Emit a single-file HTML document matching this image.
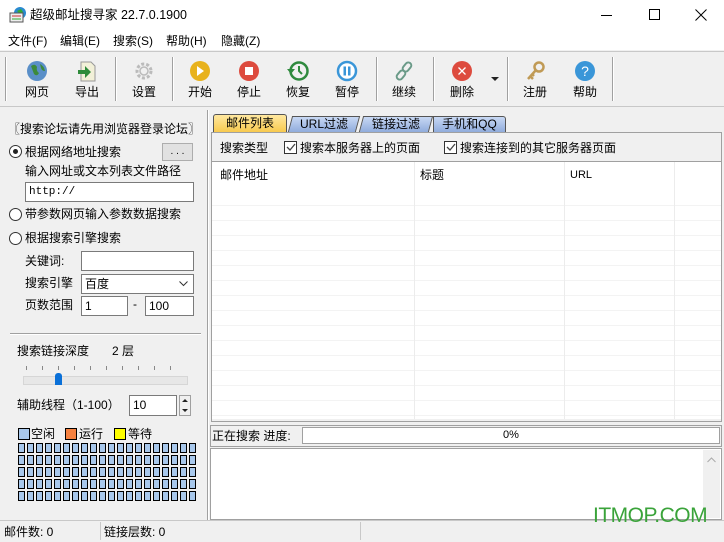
<!DOCTYPE html>
<html><head><meta charset="utf-8"><style>
*{box-sizing:border-box;margin:0;padding:0}
body{width:724px;height:542px;overflow:hidden;background:#f0f0f0;font-family:"Liberation Sans","Noto Sans CJK SC",sans-serif;font-size:12px;color:#000;position:relative}
.a{position:absolute;white-space:nowrap}
.t{line-height:14px}
.sep{position:absolute;top:57px;width:2px;height:44px;border-left:1px solid #a0a0a0;border-right:1px solid #fff}
.btn{position:absolute;top:60px;width:44px;text-align:center}
.btn svg{display:block;margin:0 auto}
.btn span{display:block;margin-top:3px;line-height:14px}
.inp{position:absolute;background:#fff;border:1px solid #7a7a7a;height:20px;padding-left:3px;line-height:18px}
.radio{position:absolute;width:13px;height:13px;border:1px solid #333;border-radius:50%;background:#fff}
.chk{position:absolute;width:13px;height:13px;border:1px solid #333;background:#fff}
.grid{position:absolute;left:18px;top:443px;display:grid;grid-template-columns:repeat(20,7px);grid-auto-rows:10px;column-gap:2px;row-gap:2px}
.grid i{display:block;background:#a8c8ec;border:1px solid #000}
</style></head><body>
<div class="a" style="left:0;top:0;width:724px;height:50px;background:#fff"></div>
<svg class="a" style="left:9px;top:6px" width="18" height="18"><circle cx="11" cy="7" r="6" fill="#2a8ad0"/><path d="M8 5 l4 -2 2 3 -3 2z" fill="#3a3"/><rect x="1" y="7" width="13" height="9" fill="#eee" stroke="#555"/><line x1="3" y1="10" x2="12" y2="10" stroke="#c33"/><line x1="3" y1="13" x2="12" y2="13" stroke="#3a3"/></svg>
<div class="a t" style="left:30px;top:8px;font-size:12.5px">超级邮址搜寻家 22.7.0.1900</div>
<div class="a" style="left:601px;top:15px;width:11px;height:1px;background:#000"></div>
<div class="a" style="left:649px;top:9px;width:11px;height:11px;border:1px solid #000"></div>
<svg class="a" style="left:695px;top:9px" width="12" height="12"><path d="M0.5 .5L11.5 11.5M11.5 .5L.5 11.5" stroke="#000"/></svg>
<div class="a t" style="left:8px;top:34px">文件(F)</div>
<div class="a t" style="left:60px;top:34px">编辑(E)</div>
<div class="a t" style="left:113px;top:34px">搜索(S)</div>
<div class="a t" style="left:166px;top:34px">帮助(H)</div>
<div class="a t" style="left:221px;top:34px">隐藏(Z)</div>
<div class="a" style="left:0;top:51px;width:724px;height:56px;border-top:1px solid #c8c8c8;border-bottom:1px solid #c8c8c8"></div>
<div class="sep" style="left:5px"></div>
<div class="sep" style="left:115px"></div><div class="sep" style="left:172px"></div><div class="sep" style="left:376px"></div><div class="sep" style="left:433px"></div><div class="sep" style="left:507px"></div><div class="sep" style="left:612px"></div>
<div class="btn" style="left:15px"><svg width="22" height="22"><circle cx="11" cy="11" r="10" fill="#5a8fc8"/><path d="M5 6 q4 -3 6 1 q-1 4 2 6 q-2 4 -5 1z M14 4 q4 2 5 7 q-3 0 -4 -3z" fill="#3c8a3c"/></svg><span>网页</span></div>
<div class="btn" style="left:65px"><svg width="22" height="22"><path d="M5 2h10l4 4v15H5z" fill="#f2f0d8" stroke="#999"/><path d="M2 10h7v-4l6 6-6 6v-4H2z" fill="#2e8b3a"/></svg><span>导出</span></div>
<div class="btn" style="left:122px"><svg width="22" height="22"><circle cx="11" cy="11" r="7" fill="none" stroke="#bbb" stroke-width="3" stroke-dasharray="3 2"/><circle cx="11" cy="11" r="4" fill="none" stroke="#bbb" stroke-width="1.5"/></svg><span>设置</span></div>
<div class="btn" style="left:178px"><svg width="22" height="22"><circle cx="11" cy="11" r="10" fill="#e8b21c"/><path d="M8 6l7 5-7 5z" fill="#fff"/></svg><span>开始</span></div>
<div class="btn" style="left:227px"><svg width="22" height="22"><circle cx="11" cy="11" r="10" fill="#dd4b3e"/><rect x="7" y="7" width="8" height="8" fill="#fff"/></svg><span>停止</span></div>
<div class="btn" style="left:276px"><svg width="24" height="22"><circle cx="13" cy="11" r="8.5" fill="none" stroke="#2f8a3e" stroke-width="2.5"/><path d="M13 6v5l3 3" stroke="#2f8a3e" stroke-width="2" fill="none"/><path d="M1 9l4 5 4-5z" fill="#2f8a3e"/></svg><span>恢复</span></div>
<div class="btn" style="left:325px"><svg width="22" height="22"><circle cx="11" cy="11" r="9" fill="#fff" stroke="#3a96d8" stroke-width="2.5"/><rect x="7.5" y="6.5" width="2.5" height="9" fill="#3a96d8"/><rect x="12" y="6.5" width="2.5" height="9" fill="#3a96d8"/></svg><span>暂停</span></div>
<div class="btn" style="left:382px"><svg width="22" height="22"><g fill="none" stroke="#6a9a88" stroke-width="2"><rect x="11" y="2" width="6" height="10" rx="3" transform="rotate(40 14 7)"/><rect x="5" y="10" width="6" height="10" rx="3" transform="rotate(40 8 15)"/></g></svg><span>继续</span></div>
<div class="btn" style="left:440px"><svg width="22" height="22"><circle cx="11" cy="11" r="10" fill="#dd4b3e"/><path d="M7.5 7.5l7 7M14.5 7.5l-7 7" stroke="#fff" stroke-width="1.3"/></svg><span>删除</span></div>
<svg class="a" style="left:491px;top:77px" width="8" height="5"><path d="M0 0h8l-4 4z" fill="#222"/></svg>
<div class="btn" style="left:513px"><svg width="22" height="22"><circle cx="15" cy="7" r="4.5" fill="none" stroke="#c09a55" stroke-width="2.5"/><path d="M12 10L4 19M6 16l3 3M8 14l2 2" stroke="#c09a55" stroke-width="2.5"/></svg><span>注册</span></div>
<div class="btn" style="left:563px"><svg width="22" height="22"><circle cx="11" cy="11" r="10" fill="#3a96d8"/><text x="11" y="16" font-size="14" fill="#fff" text-anchor="middle" font-family="Liberation Sans">?</text></svg><span>帮助</span></div>
<div class="a" style="left:207px;top:110px;width:2px;height:410px;border-left:1px solid #a0a0a0;border-right:1px solid #fff"></div>
<div class="a t" style="left:8px;top:122px">〖搜索论坛请先用浏览器登录论坛〗</div>
<div class="radio" style="left:9px;top:145px"><div style="position:absolute;left:3px;top:3px;width:5px;height:5px;border-radius:50%;background:#222"></div></div>
<div class="a t" style="left:25px;top:145px">根据网络地址搜索</div>
<div class="a" style="left:162px;top:143px;width:31px;height:18px;background:#e1e1e1;border:1px solid #adadad;text-align:center;line-height:16px;font-size:10px">. . .</div>
<div class="a t" style="left:25px;top:164px">输入网址或文本列表文件路径</div>
<div class="inp" style="left:25px;top:182px;width:169px;font-family:'Liberation Mono',monospace;font-size:11px">http://</div>
<div class="radio" style="left:9px;top:208px"></div>
<div class="a t" style="left:25px;top:207px">带参数网页输入参数数据搜索</div>
<div class="radio" style="left:9px;top:232px"></div>
<div class="a t" style="left:25px;top:231px">根据搜索引擎搜索</div>
<div class="a t" style="left:25px;top:254px">关键词:</div>
<div class="inp" style="left:81px;top:251px;width:113px"></div>
<div class="a t" style="left:25px;top:276px">搜索引擎</div>
<div class="inp" style="left:81px;top:274px;width:113px">百度</div>
<svg class="a" style="left:179px;top:281px" width="9" height="6"><path d="M.5 .5l4 4 4-4" stroke="#333" fill="none"/></svg>
<div class="a t" style="left:25px;top:298px">页数范围</div>
<div class="inp" style="left:81px;top:296px;width:47px">1</div>
<div class="a t" style="left:133px;top:297px">-</div>
<div class="inp" style="left:145px;top:296px;width:49px">100</div>
<div class="a" style="left:10px;top:333px;width:191px;height:2px;border-top:1px solid #a0a0a0;border-bottom:1px solid #fff"></div>
<div class="a t" style="left:17px;top:344px">搜索链接深度</div>
<div class="a t" style="left:112px;top:344px">2 层</div>
<div class="a" style="left:26px;top:366px;width:160px;height:4px;background:repeating-linear-gradient(90deg,#888 0,#888 1px,transparent 1px,transparent 16px)"></div>
<div class="a" style="left:23px;top:376px;width:165px;height:9px;background:#e7e7e7;border:1px solid #d6d6d6"></div>
<div class="a" style="left:55px;top:373px;width:7px;height:12px;background:#0a70d8;border-radius:3px 3px 0 0"></div>
<div class="a t" style="left:17px;top:398px">辅助线程（1-100）</div>
<div class="inp" style="left:129px;top:395px;width:48px;height:21px">10</div>
<div class="a" style="left:179px;top:395px;width:12px;height:21px;border:1px solid #a0a0a0;background:#f0f0f0"></div>
<svg class="a" style="left:181px;top:398px" width="8" height="16"><path d="M1 4l3-3 3 3zM1 11l3 3 3-3z" fill="#222"/></svg>
<div class="a" style="left:18px;top:428px;width:12px;height:12px;background:#a8c8ec;border:1px solid #000"></div>
<div class="a t" style="left:31px;top:427px">空闲</div>
<div class="a" style="left:65px;top:428px;width:12px;height:12px;background:#f58140;border:1px solid #000"></div>
<div class="a t" style="left:79px;top:427px">运行</div>
<div class="a" style="left:114px;top:428px;width:12px;height:12px;background:#ffff00;border:1px solid #000"></div>
<div class="a t" style="left:128px;top:427px">等待</div>
<div class="grid">
<i></i><i></i><i></i><i></i><i></i><i></i><i></i><i></i><i></i><i></i><i></i><i></i><i></i><i></i><i></i><i></i><i></i><i></i><i></i><i></i>
<i></i><i></i><i></i><i></i><i></i><i></i><i></i><i></i><i></i><i></i><i></i><i></i><i></i><i></i><i></i><i></i><i></i><i></i><i></i><i></i>
<i></i><i></i><i></i><i></i><i></i><i></i><i></i><i></i><i></i><i></i><i></i><i></i><i></i><i></i><i></i><i></i><i></i><i></i><i></i><i></i>
<i></i><i></i><i></i><i></i><i></i><i></i><i></i><i></i><i></i><i></i><i></i><i></i><i></i><i></i><i></i><i></i><i></i><i></i><i></i><i></i>
<i></i><i></i><i></i><i></i><i></i><i></i><i></i><i></i><i></i><i></i><i></i><i></i><i></i><i></i><i></i><i></i><i></i><i></i><i></i><i></i>
</div>
<div class="a t" style="left:213px;top:114px;width:74px;height:19px;background:linear-gradient(#ffe8a0,#f7c84a);border:1px solid #555;border-bottom:none;border-radius:3px 3px 0 0;text-align:center;line-height:17px">邮件列表</div>
<div class="a t" style="left:290px;top:116px;width:68px;height:16px;background:linear-gradient(#c8d8f4,#90acdc);border:1px solid #555;border-bottom:none;text-align:center;line-height:14px;transform:skewX(-15deg)"><span style="display:inline-block;transform:skewX(15deg)">URL过滤</span></div>
<div class="a t" style="left:361px;top:116px;width:70px;height:16px;background:linear-gradient(#c8d8f4,#90acdc);border:1px solid #555;border-bottom:none;text-align:center;line-height:14px;transform:skewX(-15deg)"><span style="display:inline-block;transform:skewX(15deg)">链接过滤</span></div>
<div class="a t" style="left:433px;top:116px;width:73px;height:16px;background:linear-gradient(#c8d8f4,#90acdc);border:1px solid #555;border-bottom:none;border-radius:0 3px 0 0;text-align:center;line-height:14px">手机和QQ</div>
<div class="a" style="left:211px;top:132px;width:511px;height:290px;border:1px solid #a0a0a0"></div>
<div class="a t" style="left:220px;top:141px">搜索类型</div>
<div class="chk" style="left:284px;top:141px"></div><svg class="a" style="left:286px;top:143px" width="10" height="9"><path d="M1 4l3 3 5-6" stroke="#444" fill="none" stroke-width="1.3"/></svg>
<div class="a t" style="left:300px;top:141px">搜索本服务器上的页面</div>
<div class="chk" style="left:444px;top:141px"></div><svg class="a" style="left:446px;top:143px" width="10" height="9"><path d="M1 4l3 3 5-6" stroke="#444" fill="none" stroke-width="1.3"/></svg>
<div class="a t" style="left:460px;top:141px">搜索连接到的其它服务器页面</div>
<div class="a" style="left:212px;top:161px;width:509px;height:258px;background:#fff;border-top:1px solid #a0a0a0"></div>
<div class="a" style="left:212px;top:191px;width:509px;height:228px;background-image:repeating-linear-gradient(180deg,transparent 0,transparent 14px,#f3f3f3 14px,#f3f3f3 15px)"></div>
<div class="a" style="left:414px;top:162px;width:1px;height:257px;background:#ececec"></div>
<div class="a" style="left:564px;top:162px;width:1px;height:257px;background:#ececec"></div>
<div class="a" style="left:674px;top:162px;width:1px;height:257px;background:#ececec"></div>
<div class="a t" style="left:220px;top:168px">邮件地址</div>
<div class="a t" style="left:420px;top:168px">标题</div>
<div class="a t" style="left:570px;top:168px;font-size:11px">URL</div>
<div class="a" style="left:210px;top:425px;width:512px;height:22px;border:1px solid #a0a0a0"></div>
<div class="a t" style="left:212px;top:429px">正在搜索 进度:</div>
<div class="a" style="left:302px;top:427px;width:418px;height:17px;background:#fff;border:1px solid #a0a0a0;text-align:center;font-size:11px;line-height:15px">0%</div>
<div class="a" style="left:210px;top:448px;width:512px;height:72px;border:1px solid #a0a0a0;background:#fff"></div>
<div class="a" style="left:703px;top:450px;width:17px;height:68px;background:#f0f0f0"></div>
<svg class="a" style="left:707px;top:457px" width="9" height="6"><path d="M.5 5l4-4 4 4" stroke="#aaa" fill="none"/></svg>
<div class="a" style="left:0;top:520px;width:724px;height:22px;border-top:1px solid #c8c8c8"></div>
<div class="a" style="left:100px;top:522px;width:1px;height:18px;background:#c8c8c8"></div>
<div class="a" style="left:360px;top:522px;width:1px;height:18px;background:#c8c8c8"></div>
<div class="a t" style="left:4px;top:525px">邮件数: 0</div>
<div class="a t" style="left:104px;top:525px">链接层数: 0</div>
<div class="a" style="left:593px;top:503px;font-size:21px;color:#3aa33a;line-height:26px;letter-spacing:-0.5px">ITMOP.COM</div>
</body></html>
